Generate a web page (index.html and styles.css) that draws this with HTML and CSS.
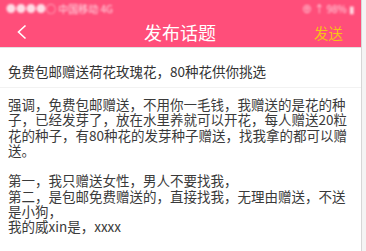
FILE: index.html
```html
<!DOCTYPE html>
<html lang="zh-CN">
<head>
<meta charset="utf-8">
<link rel="stylesheet" href="styles.css">
</head>
<body>
<div class="page">
  <div class="status">
    <span class="status-left">●●●●○ 中国移动 4G</span>
    <span class="status-right">⊕ ↑ 98% ▮</span>
  </div>
  <div class="nav">
    <span class="back">
      <svg width="12" height="16" viewBox="0 0 12 16"><polyline points="9.5,1.5 2.5,8 9.5,14.5" fill="none" stroke="#ffffff" stroke-width="1.6"/></svg>
    </span>
    <span class="nav-title">发布话题</span>
    <span class="send">发送</span>
  </div>
  <div class="title">免费包邮赠送荷花玫瑰花，80种花供你挑选</div>
  <div class="content">强调，免费包邮赠送，不用你一毛钱，我赠送的是花的种子，已经发芽了，放在水里养就可以开花，每人赠送20粒花的种子，有80种花的发芽种子赠送，找我拿的都可以赠送。<br><br>第一，我只赠送女性，男人不要找我，<br>第二，是包邮免费赠送的，直接找我，无理由赠送，不送是小狗，<br>我的威xin是，xxxx</div>
</div>
</body>
</html>
```
FILE: styles.css
```css
html, body {
  margin: 0;
  padding: 0;
  background: #f4f4f4;
  height: 100%;
  overflow: hidden;
}
body {
  font-family: "Noto Sans CJK SC", "Noto Sans", sans-serif;
}
.page {
  width: 361px;
  height: 100%;
  background: #ffffff;
  border-right: 1px solid #d6d6d6;
}
.status {
  height: 17px;
  background: #ff4e7a;
  display: flex;
  justify-content: space-between;
  align-items: center;
  padding: 0 6px;
  color: rgba(255,255,255,0.8);
  font-size: 10px;
}
.status span {
  filter: blur(1.2px);
}
.nav {
  height: 30px;
  background: #ff4e7a;
  display: flex;
  align-items: center;
  border-bottom: 1px solid #e2e2e2;
}
.back {
  width: 44px;
  display: flex;
  align-items: center;
  padding-left: 16px;
  box-sizing: border-box;
  filter: blur(0.4px);
}
.nav-title {
  flex: 1;
  text-align: center;
  color: #ffffff;
  font-size: 18px;
  margin-left: 2px;
}
.send {
  width: 44px;
  color: #f6c21a;
  font-size: 14.5px;
  text-align: left;
  margin-right: 3px;
  filter: blur(0.5px);
}
.title {
  padding: 15px 8px 8px;
  line-height: 16px;
  font-size: 13.5px;
  color: #333333;
  border-bottom: 1px solid #f2f2f2;
}
.content {
  padding: 9px 12px 0 8px;
  font-size: 13.5px;
  line-height: 15.3px;
  color: #3a3a3a;
}
```
